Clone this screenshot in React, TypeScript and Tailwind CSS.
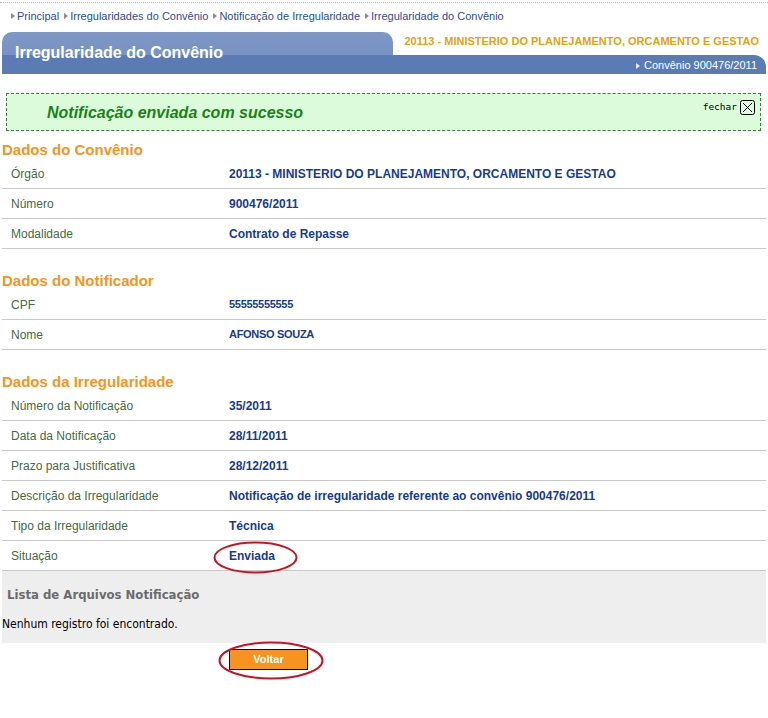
import React from "react";

const Arrow = ({ color = "#8a8a8a" }: { color?: string }) => (
  <svg width="4" height="6" viewBox="0 0 4 6" className="shrink-0">
    <path d="M0 0 L4 3 L0 6 Z" fill={color} />
  </svg>
);

type Row = { label: string; value: string; small?: boolean };

const Section = ({ title, rows, mt }: { title: string; rows: Row[]; mt: string }) => (
  <div className={mt}>
    <div className="h-[20px] flex items-center text-[15px] font-bold text-[#f7941d] leading-none">{title}</div>
    {rows.map((r) => (
      <div key={r.label} className="h-[30px] flex items-center border-b border-[#c9c9c9]">
        <div className="w-[227px] pl-[9px] text-[12px] text-[#3f6b45]">{r.label}</div>
        <div className={`${r.small ? "text-[11px] tracking-[-0.3px]" : "text-[12px]"} font-bold text-[#163b94]`}>{r.value}</div>
      </div>
    ))}
  </div>
);

export default function App() {
  return (
    <div className="relative w-[768px] h-[718px] bg-white" style={{ fontFamily: '"Liberation Sans", Arial, sans-serif' }}>
      <div className="h-[2px]" />
      <div className="border-t border-dotted border-[#b5b5b5]" />
      <div className="px-[2px]">
        {/* breadcrumb */}
        <div className="h-[26px] flex items-center pl-[9px] gap-[5px] text-[11px] text-[#2d4b9b]">
          {["Principal", "Irregularidades do Convênio", "Notificação de Irregularidade", "Irregularidade do Convênio"].map((t) => (
            <div key={t} className="flex items-center gap-[2px]">
              <Arrow />
              <span>{t}</span>
            </div>
          ))}
        </div>
        <div className="h-[3px]" />
        {/* header */}
        <div className="flex">
          <div
            className="w-[391px] h-[42px] rounded-t-[10px] pl-[13px] pt-[9px]"
            style={{ background: "linear-gradient(to bottom, #7d98c6 0px, #7893c2 23px, #5a7bb3 23px, #5a7bb3 42px)" }}
          >
            <span className="text-white text-[16px] font-bold">Irregularidade do Convênio</span>
          </div>
          <div className="flex-1 flex flex-col">
            <div className="h-[23px] flex items-center justify-end pr-[7px] text-[11px] font-bold text-[#e2a30f] pb-[4px]">
              20113 - MINISTERIO DO PLANEJAMENTO, ORCAMENTO E GESTAO
            </div>
            <div className="h-[19px] bg-[#5a7bb3] rounded-tr-[12px] flex items-center justify-end pr-[9px] gap-[4px] text-[11px] text-white pt-[2px]">
              <Arrow color="#e6ecf5" />
              <span>Convênio 900476/2011</span>
            </div>
          </div>
        </div>
        {/* success */}
        <div className="h-[19px]" />
        <div className="ml-[4px] w-[755px] h-[38px] border border-dashed border-[#3f7a3f] bg-[#dcfbdb] flex items-center justify-between pl-[40px] pr-[5px]">
          <span className="text-[16px] font-bold italic text-[#178317] pt-[1px]">Notificação enviada com sucesso</span>
          <div className="flex items-center gap-[3px] self-start mt-[6px]">
            <span className="text-[9.5px] text-black" style={{ fontFamily: '"DejaVu Sans Mono", monospace' }}>fechar</span>
            <svg width="15" height="15" viewBox="0 0 15 15">
              <rect x="0.5" y="0.5" width="14" height="14" rx="2" fill="none" stroke="#000" />
              <path d="M3 3 L12 12 M12 3 L3 12" stroke="#000" strokeWidth="1" />
            </svg>
          </div>
        </div>
        <Section
          mt="mt-[8px]"
          title="Dados do Convênio"
          rows={[
            { label: "Órgão", value: "20113 - MINISTERIO DO PLANEJAMENTO, ORCAMENTO E GESTAO" },
            { label: "Número", value: "900476/2011" },
            { label: "Modalidade", value: "Contrato de Repasse" },
          ]}
        />
        <Section
          mt="mt-[21px]"
          title="Dados do Notificador"
          rows={[
            { label: "CPF", value: "55555555555", small: true },
            { label: "Nome", value: "AFONSO SOUZA", small: true },
          ]}
        />
        <Section
          mt="mt-[21px]"
          title="Dados da Irregularidade"
          rows={[
            { label: "Número da Notificação", value: "35/2011" },
            { label: "Data da Notificação", value: "28/11/2011" },
            { label: "Prazo para Justificativa", value: "28/12/2011" },
            { label: "Descrição da Irregularidade", value: "Notificação de irregularidade referente ao convênio 900476/2011" },
            { label: "Tipo da Irregularidade", value: "Técnica" },
            { label: "Situação", value: "Enviada" },
          ]}
        />
        <div className="h-[72px] bg-[#eeeeee]" style={{ fontFamily: '"DejaVu Sans Condensed", "DejaVu Sans", sans-serif' }}>
          <div className="h-[45px] flex items-center pl-[5px] pt-[2px] text-[13px] font-bold text-[#6b6b6b]">Lista de Arquivos Notificação</div>
          <div className="text-[12px] text-black leading-[16px]">Nenhum registro foi encontrado.</div>
        </div>
        <div className="pl-[227px] pt-[6px]">
          <button className="w-[79px] h-[21px] bg-[#f7931e] border border-black text-white text-[11px] font-bold flex items-center justify-center">
            Voltar
          </button>
        </div>
      </div>
      {/* annotation ellipses */}
      <svg className="absolute left-0 top-0 pointer-events-none" width="768" height="718">
        <ellipse cx="255.5" cy="557.5" rx="41" ry="15" fill="none" stroke="#cc1122" strokeWidth="2" />
        <ellipse cx="271" cy="660.5" rx="51.5" ry="18" fill="none" stroke="#cc1122" strokeWidth="2" />
      </svg>
    </div>
  );
}
